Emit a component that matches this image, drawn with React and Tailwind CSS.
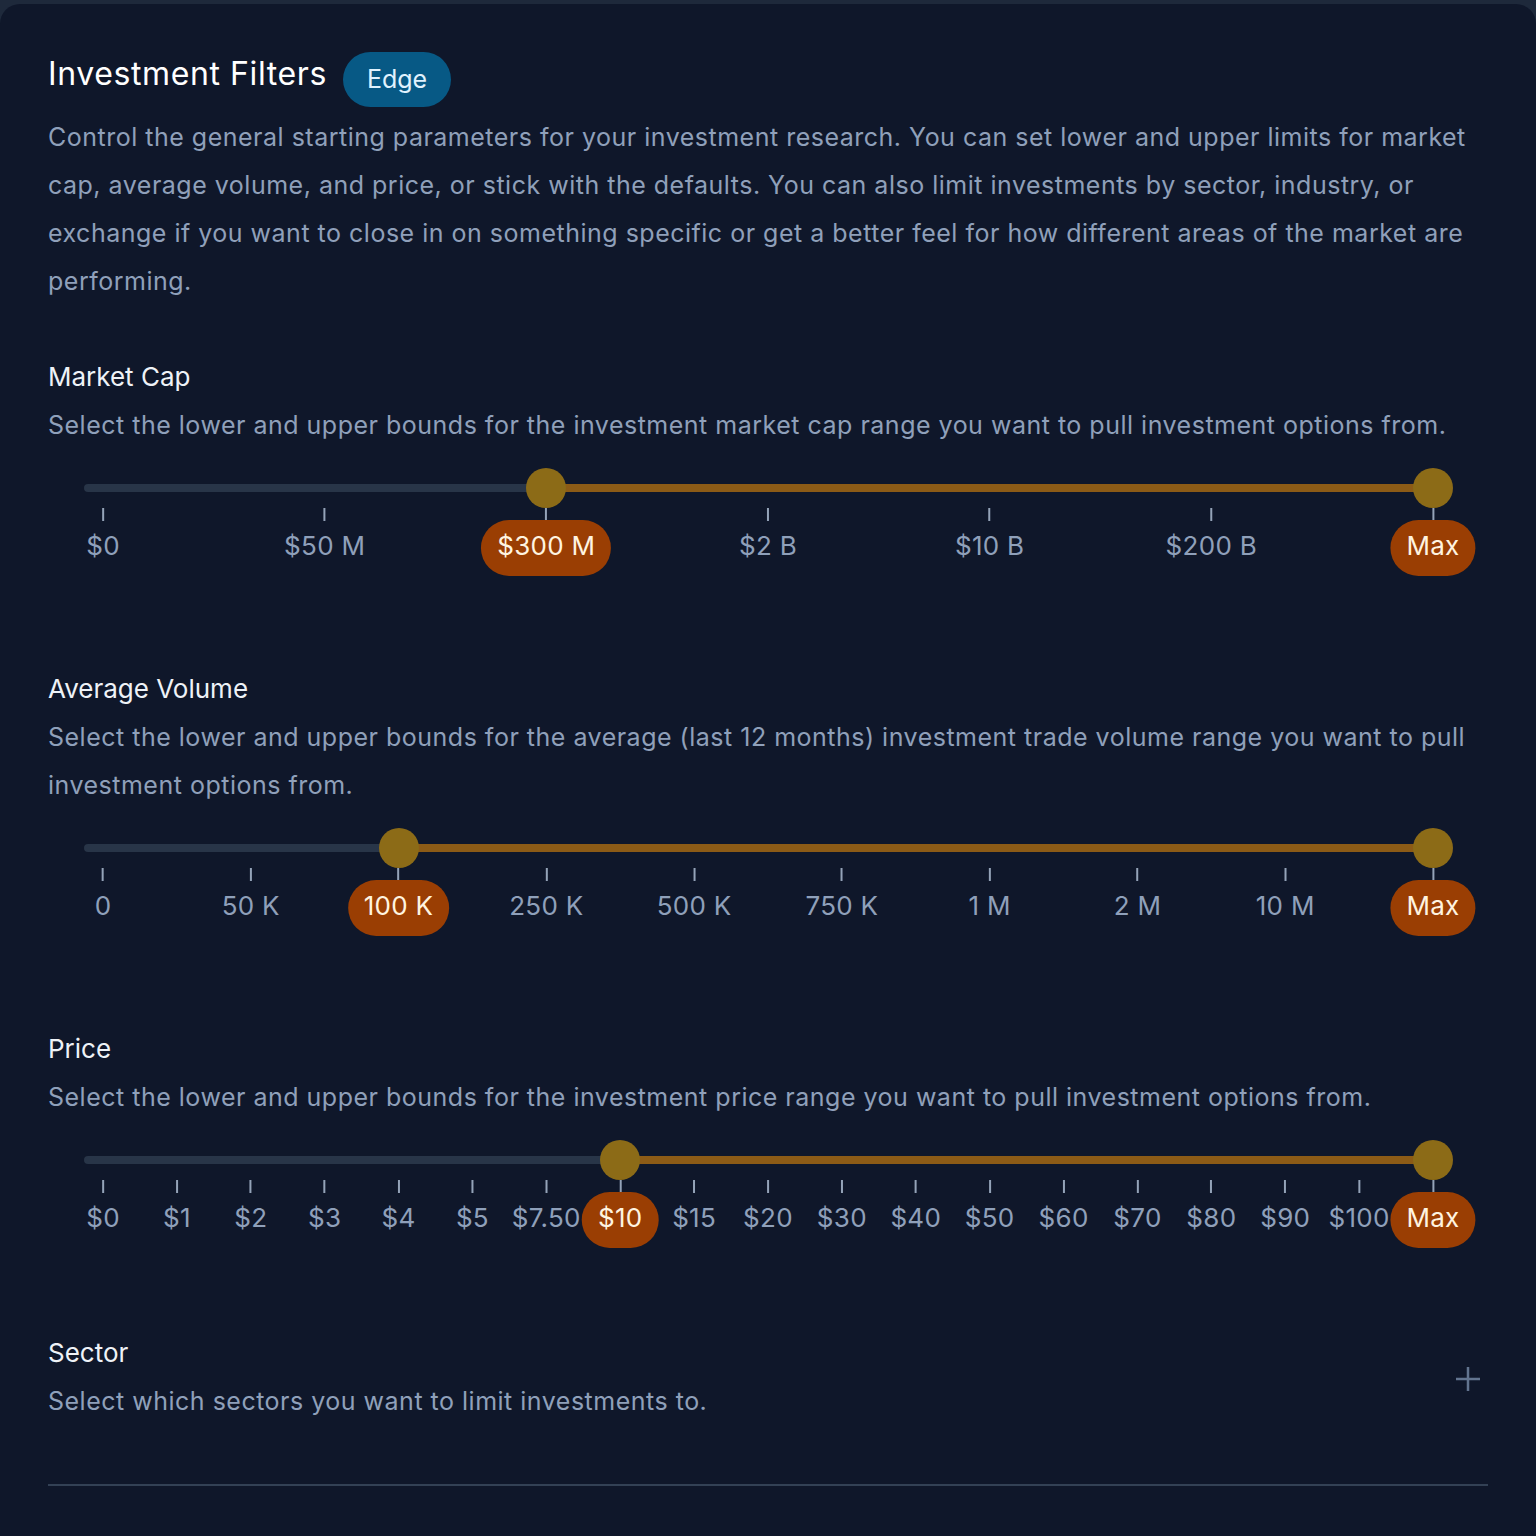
import { useState } from 'react';

const MARKET_CAP = ['$0', '$50 M', '$300 M', '$2 B', '$10 B', '$200 B', 'Max'];
const VOLUME = ['0', '50 K', '100 K', '250 K', '500 K', '750 K', '1 M', '2 M', '10 M', 'Max'];
const PRICE = [
  '$0', '$1', '$2', '$3', '$4', '$5', '$7.50', '$10', '$15', '$20',
  '$30', '$40', '$50', '$60', '$70', '$80', '$90', '$100', 'Max',
];

function RangeSlider({ steps, low, high }) {
  const last = steps.length - 1;
  const pct = (i) => (i / last) * 100;

  return (
    <div className="relative mx-9 mt-[19px] h-[108px]">
      <div className="absolute inset-x-0 top-4 h-2 rounded-full bg-[#283548]" />
      <div className="absolute inset-x-[19px] inset-y-0">
        <div
          className="absolute top-4 h-2 bg-[#8c5b16]"
          style={{ left: `${pct(low)}%`, right: `${100 - pct(high)}%` }}
        />

        {steps.map((s, i) => {
          const active = i === low || i === high;
          return (
            <div key={s} className="absolute top-10 -translate-x-1/2" style={{ left: `${pct(i)}%` }}>
              <div className="mx-auto h-[13px] w-[2px] bg-[#94a3b8]" />
              <div
                className={`-mt-px flex h-[56px] items-center justify-center whitespace-nowrap rounded-full pb-[6px] text-[26px] tracking-[0.3px] ${
                  active ? 'bg-[#9a3e03] px-4 text-[#fff4e0]' : 'text-[#8fa0ba]'
                }`}
              >
                {s}
              </div>
            </div>
          );
        })}

        {[low, high].map((i) => (
          <div
            key={i}
            className="absolute top-0 size-10 -translate-x-1/2 rounded-full bg-[#8c6b17]"
            style={{ left: `${pct(i)}%` }}
          />
        ))}
      </div>
    </div>
  );
}

function Section({ title, text, className = '', children }) {
  return (
    <div className={className}>
      <h3 className="text-[26px] leading-[48px] text-[#eef2f7]">{title}</h3>
      <p className="text-[25px] leading-[48px] tracking-[0.5px] text-[#8fa0ba]">{text}</p>
      {children}
    </div>
  );
}

export default function App() {
  const [open, setOpen] = useState(false);

  return (
    <div className="min-h-screen bg-[#1e293b] pt-1 font-['Inter',sans-serif]">
      <div className="min-h-[1532px] rounded-t-[20px] bg-[#0f172a] px-12 pt-12">
        <div className="flex items-start gap-4">
          <h2 className="text-[32px] leading-[44px] tracking-[0.6px] text-white">Investment Filters</h2>
          <span className="flex h-[55px] items-center rounded-full bg-[#075985] px-6 text-[25px] text-[#e0f2fe]">
            Edge
          </span>
        </div>
        <p className="mt-[6px] text-[25px] leading-[48px] tracking-[0.5px] text-[#8fa0ba]">
          Control the general starting parameters for your investment research. You can set lower and upper
          limits for market cap, average volume, and price, or stick with the defaults. You can also limit
          investments by sector, industry, or exchange if you want to close in on something specific or get a
          better feel for how different areas of the market are performing.
        </p>

        <Section
          className="mt-12"
          title="Market Cap"
          text="Select the lower and upper bounds for the investment market cap range you want to pull investment options from."
        >
          <RangeSlider steps={MARKET_CAP} low={2} high={6} />
        </Section>

        <Section
          className="mt-[89px]"
          title="Average Volume"
          text="Select the lower and upper bounds for the average (last 12 months) investment trade volume range you want to pull investment options from."
        >
          <RangeSlider steps={VOLUME} low={2} high={9} />
        </Section>

        <Section
          className="mt-[89px]"
          title="Price"
          text="Select the lower and upper bounds for the investment price range you want to pull investment options from."
        >
          <RangeSlider steps={PRICE} low={7} high={18} />
        </Section>

        <button
          onClick={() => setOpen(!open)}
          className="mt-[81px] flex w-full items-center justify-between border-b-2 border-[#334155] pb-[59px] pr-2 text-left"
        >
          <div>
            <h3 className="text-[26px] leading-[48px] text-[#eef2f7]">Sector</h3>
            <p className="text-[25px] leading-[48px] tracking-[0.5px] text-[#8fa0ba]">
              Select which sectors you want to limit investments to.
            </p>
          </div>
          <svg width="24" height="24" viewBox="0 0 24 24" className="mt-1 text-[#62748f]">
            <path d="M12 0v24M0 12h24" stroke="currentColor" strokeWidth="2.5" />
          </svg>
        </button>
      </div>
    </div>
  );
}
